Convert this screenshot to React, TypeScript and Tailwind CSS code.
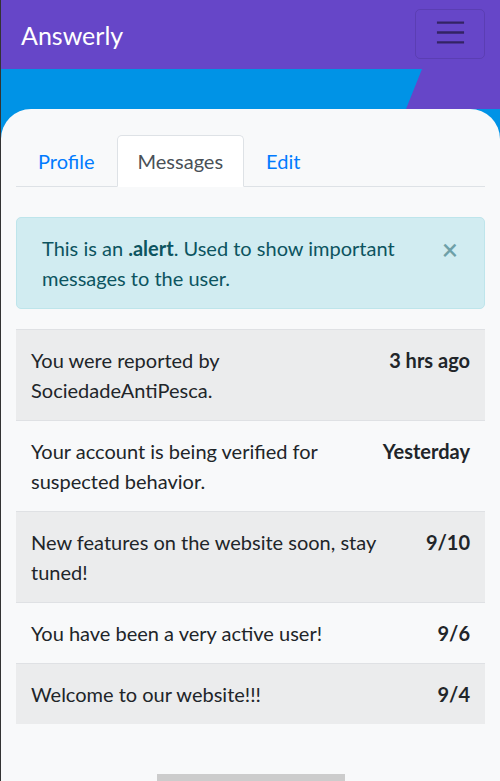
const messages = [
  { text: 'You were reported by SociedadeAntiPesca.', when: '3 hrs ago' },
  { text: 'Your account is being verified for suspected behavior.', when: 'Yesterday' },
  { text: 'New features on the website soon, stay tuned!', when: '9/10' },
  { text: 'You have been a very active user!', when: '9/6' },
  { text: 'Welcome to our website!!!', when: '9/4' },
];

function TogglerIcon() {
  return (
    <svg viewBox="0 0 30 30" className="w-[37px] h-[37px] -mt-[4px]">
      <path d="M4 7h22M4 15h22M4 23h22" stroke="rgba(0,0,0,0.5)" strokeWidth="2" strokeLinecap="butt" />
    </svg>
  );
}

export default function App() {
  return (
    <div className="min-h-[781px] bg-[#f8f9fa] border-l border-[#333] font-['Lato',sans-serif] text-[20px] leading-[30px] text-[#212529] overflow-hidden">
      {/* navbar */}
      <nav className="h-[69px] bg-[#6646c8] flex items-center justify-between pl-[20px] pr-[15px]">
        <span className="text-white text-[25px] leading-[37px] pt-[1px]">Answerly</span>
        <button className="w-[70px] h-[50px] -mt-px border border-black/10 rounded-[5px] flex items-center justify-center">
          <TogglerIcon />
        </button>
      </nav>

      {/* header band */}
      <div className="relative h-[40px] bg-[#6646c8]">
        <svg className="absolute inset-0 w-full h-full" viewBox="0 0 499 40" preserveAspectRatio="none">
          <polygon points="0,0 421,0 405,40 0,40" fill="#0093e6" />
        </svg>
      </div>

      {/* card */}
      <div className="bg-[#6646c8]">
        <div className="bg-[#0093e6]">
          <div className="bg-[#f8f9fa] rounded-t-[30px] px-[15px] pt-[26px] pb-[50px]">
            {/* tabs */}
            <ul className="flex border-b border-[#dee2e6]">
              <li className="px-[21px] py-[10px] border border-transparent -mb-px text-[#007bff]">Profile</li>
              <li className="px-[20px] py-[10px] border border-[#dee2e6] border-b-white rounded-t-[5px] bg-white -mb-px text-[#495057]">Messages</li>
              <li className="px-[21px] py-[10px] border border-transparent -mb-px text-[#007bff]">Edit</li>
            </ul>

            {/* alert */}
            <div className="relative mt-[30px] mb-[20px] bg-[#d1ecf1] border border-[#bee5eb] rounded-[5px] text-[#0c5460] pl-[25px] pr-[60px] py-[15px]">
              This is an <strong className="font-bold">.alert</strong>. Used to show important messages to the user.
              <span className="absolute top-[16px] right-[26px] text-[28px] leading-[30px] font-semibold text-[#6ea0a8]">×</span>
            </div>

            {/* list */}
            <div className="flex flex-col">
              {messages.map((m, i) => (
                <div
                  key={i}
                  className={`flex justify-between gap-4 p-[15px] border-t border-[#dfe1e4] ${i % 2 === 0 ? 'bg-[#ebeced]' : 'bg-[#f8f9fa]'}`}
                >
                  <span>{m.text}</span>
                  <span className="font-bold whitespace-nowrap">{m.when}</span>
                </div>
              ))}
            </div>
          </div>
        </div>
      </div>

      {/* bottom handle */}
      <div className="flex justify-center">
        <div className="w-[188px] h-[7px] bg-[#cccccc]" />
      </div>
    </div>
  );
}
